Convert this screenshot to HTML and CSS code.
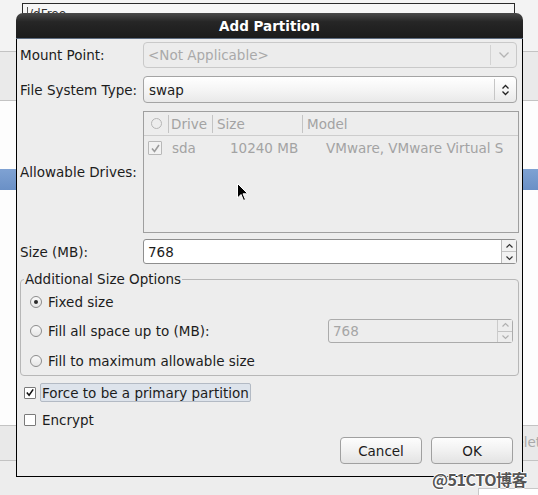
FILE: index.html
```html
<!DOCTYPE html>
<html>
<head>
<meta charset="utf-8">
<link rel="stylesheet" href="styles.css">
</head>
<body>
<div class="desk">
  <div class="bg-top">
    <div class="listbox"><span class="lb-sep"></span><span class="lb-text">/dFree</span></div>
  </div>
  <div class="bg-line"></div>
  <div class="bg-toolbar"></div>
  <div class="bg-line"></div>
  <div class="bg-white h68"></div>
  <div class="bg-sel"></div>
  <div class="bg-white h235"></div>
  <div class="bg-line"></div>
  <div class="bg-buttons"><span class="bg-btn">Delete</span></div>
  <div class="bg-line"></div>
  <div class="bg-bottom"><div class="bg-corner"></div></div>
</div>

<div class="dialog">
  <div class="titlebar">Add Partition</div>
  <div class="body">
    <div class="form">
      <div class="label m8">Mount Point:</div>
      <div class="combo disabled r1">
        <span class="combo-text">&lt;Not Applicable&gt;</span>
        <span class="combo-btn wide">
          <svg width="12" height="8" viewBox="0 0 12 8"><path d="M1.5 1.5 L6 6 L10.5 1.5" fill="none" stroke="#b4b4b4" stroke-width="1.3"/></svg>
        </span>
      </div>

      <div class="label m8">File System Type:</div>
      <div class="combo r2">
        <span class="combo-text">swap</span>
        <span class="combo-btn">
          <svg width="9" height="12" viewBox="0 0 9 12"><path d="M1.5 4.5 L4.5 1.5 L7.5 4.5 M1.5 7.5 L4.5 10.5 L7.5 7.5" fill="none" stroke="#222" stroke-width="1.3"/></svg>
        </span>
      </div>

      <div class="label m6">Allowable Drives:</div>
      <div class="tree r3">
        <div class="thead">
          <span class="th th0"><span class="hradio"></span></span>
          <span class="th th1">Drive</span>
          <span class="th th2">Size</span>
          <span class="th th3">Model</span>
        </div>
        <div class="trow">
          <span class="tcheck">
            <svg width="11" height="11" viewBox="0 0 11 11"><path d="M2 5.5 L4.5 8.5 L9 2" fill="none" stroke="#9c9c9c" stroke-width="1.6"/></svg>
          </span>
          <span class="td td1">sda</span>
          <span class="td td2">10240 MB</span>
          <span class="td td3">VMware, VMware Virtual S</span>
        </div>
      </div>

      <div class="label">Size (MB):</div>
      <div class="spin r4">
        <span class="spin-text">768</span>
        <span class="spin-btns">
          <span class="sb"><svg width="9" height="6" viewBox="0 0 9 6"><path d="M1.5 4.5 L4.5 1.5 L7.5 4.5" fill="none" stroke="#333" stroke-width="1.2"/></svg></span>
          <span class="sb"><svg width="9" height="6" viewBox="0 0 9 6"><path d="M1.5 1.5 L4.5 4.5 L7.5 1.5" fill="none" stroke="#333" stroke-width="1.2"/></svg></span>
        </span>
      </div>
    </div>

    <fieldset class="frame">
      <legend>Additional Size Options</legend>
      <div class="opt">
        <span class="radio checked"></span><span>Fixed size</span>
      </div>
      <div class="opt mid">
        <span class="radio"></span><span>Fill all space up to (MB):</span>
        <div class="spin small disabled">
          <span class="spin-text">768</span>
          <span class="spin-btns">
            <span class="sb"><svg width="9" height="6" viewBox="0 0 9 6"><path d="M1.5 4.5 L4.5 1.5 L7.5 4.5" fill="none" stroke="#b0b0b0" stroke-width="1.2"/></svg></span>
            <span class="sb"><svg width="9" height="6" viewBox="0 0 9 6"><path d="M1.5 1.5 L4.5 4.5 L7.5 1.5" fill="none" stroke="#b0b0b0" stroke-width="1.2"/></svg></span>
          </span>
        </div>
      </div>
      <div class="opt">
        <span class="radio"></span><span>Fill to maximum allowable size</span>
      </div>
    </fieldset>

    <div class="check-row first">
      <span class="check on"><svg width="11" height="11" viewBox="0 0 11 11"><path d="M2 5.5 L4.5 8.5 L9 2" fill="none" stroke="#111" stroke-width="1.7"/></svg></span>
      <span class="check-label focus">Force to be a primary partition</span>
    </div>
    <div class="check-row">
      <span class="check"></span>
      <span class="check-label">Encrypt</span>
    </div>

    <div class="buttons">
      <button class="btn">Cancel</button>
      <button class="btn">OK</button>
    </div>
  </div>
</div>

<svg class="cursor" width="12" height="19" viewBox="0 0 12 19">
  <path d="M0.5 0.5 L0.5 15 L4 11.5 L6.5 17.5 L8.5 16.6 L6 10.8 L10.8 10.8 Z" fill="#000" stroke="#fff" stroke-width="1"/>
</svg>

<div class="watermark">@51CTO博客</div>
</body>
</html>
```

FILE: styles.css
```css
html, body {
  margin: 0;
  padding: 0;
}
body {
  width: 538px;
  height: 495px;
  overflow: hidden;
  position: relative;
  background: #ededed;
  font-family: "DejaVu Sans", "Noto Sans", sans-serif;
  font-size: 13.5px;
  color: #1c1c1c;
}

/* ---------- background window ---------- */
.desk {
  display: flex;
  flex-direction: column;
}
.bg-top {
  height: 51px;
  background: #f3f3f3;
  padding-top: 3px;
  box-sizing: border-box;
}
.listbox {
  margin-left: 22px;
  width: 491px;
  height: 20px;
  border: 1px solid #2a2a2a;
  background: #f6f6f6;
  display: flex;
  align-items: center;
  font-size: 12px;
  color: #333;
}
.lb-sep {
  width: 1px;
  height: 14px;
  background: #555;
  margin: 0 0 0 4px;
}
.lb-text {
  margin-left: 1px;
}
.bg-line {
  height: 1px;
  background: #c3c3c3;
}
.bg-toolbar {
  height: 48px;
  background: #eaeaea;
}
.bg-white {
  background: #fdfdfd;
}
.h68 { height: 68px; }
.h235 { height: 235px; }
.bg-sel {
  height: 21px;
  background: linear-gradient(#7fa2d3, #6a90c6);
}
.bg-buttons {
  height: 34px;
  background: #e9e9e9;
  position: relative;
}
.bg-btn {
  position: absolute;
  left: 505px;
  top: 8px;
  color: #a9a9a9;
  font-size: 13.5px;
}
.bg-bottom {
  flex: 1;
  height: 40px;
  background: #efefef;
  position: relative;
}
.bg-corner {
  position: absolute;
  left: 478px;
  top: 27px;
  width: 70px;
  height: 20px;
  background: #fff;
  border: 1px solid #c8c8c8;
}

/* ---------- dialog ---------- */
.dialog {
  position: absolute;
  left: 16px;
  top: 13px;
  width: 507px;
  height: 464px;
  display: flex;
  flex-direction: column;
}
.titlebar {
  height: 26px;
  box-sizing: border-box;
  background: linear-gradient(#4a4a4a, #262626 35%, #1b1b1b);
  border-radius: 7px 7px 0 0;
  border-bottom: 1px solid #5d6c80;
  color: #fff;
  font-weight: bold;
  font-size: 13.5px;
  display: flex;
  align-items: center;
  justify-content: center;
  padding-top: 1px;
}
.body {
  flex: 1;
  background: #ededed;
  border: 1px solid #000;
  border-top: 0;
  padding: 3px 5px 0 3px;
  display: flex;
  flex-direction: column;
}

.form {
  display: grid;
  grid-template-columns: 123px 374px;
  align-items: center;
}
.label {
  white-space: nowrap;
}
.m8 { margin-bottom: 8px; }
.m6 { margin-bottom: 6px; }
.r1 { height: 26px; margin-bottom: 8px; }
.r2 { height: 27px; margin-bottom: 8px; }
.r3 { height: 122px; margin-bottom: 6px; width: 376px; }
.r4 { height: 25px; }

/* combos */
.combo {
  box-sizing: border-box;
  border: 1px solid #a4a4a4;
  border-radius: 4px;
  background: linear-gradient(#ffffff, #f3f3f3 60%, #e9e9e9);
  display: flex;
  align-items: center;
}
.combo.disabled {
  background: #ececec;
  border-color: #c9c9c9;
  color: #a9a9a9;
}
.combo-text {
  flex: 1;
  padding-left: 4px;
}
.combo.r2 .combo-text {
  padding-left: 5px;
}
.combo-btn {
  width: 21px;
  align-self: stretch;
  margin: 2px 0;
  border-left: 1px solid #c6c6c6;
  display: flex;
  align-items: center;
  justify-content: center;
}
.combo-btn.wide {
  width: 25px;
  border-left-color: #d3d3d3;
}

/* tree */
.tree {
  box-sizing: border-box;
  border: 1px solid #9f9f9f;
  background: #ededed;
  color: #a3a3a3;
}
.thead {
  height: 24px;
  box-sizing: border-box;
  border-bottom: 1px solid #cdcdcd;
  display: flex;
  align-items: center;
}
.th {
  height: 18px;
  display: flex;
  align-items: center;
  border-right: 1px solid #c4c4c4;
  box-sizing: border-box;
}
.th0 { width: 25px; justify-content: center; padding-left: 1px; }
.th1 { width: 44px; padding-left: 2px; }
.th2 { width: 90px; padding-left: 4px; }
.th3 { border-right: 0; padding-left: 4px; }
.hradio {
  width: 9px;
  height: 9px;
  border: 1px solid #b5b5b5;
  border-radius: 50%;
}
.trow {
  height: 24px;
  display: flex;
  align-items: center;
  white-space: nowrap;
}
.tcheck {
  width: 12px;
  height: 12px;
  margin-left: 4px;
  border: 1px solid #b8b8b8;
  border-radius: 1px;
  background: #f2f2f2;
  display: flex;
  align-items: center;
  justify-content: center;
}
.td1 { margin-left: 10px; width: 58px; }
.td2 { width: 96px; }

/* spin entries */
.spin {
  box-sizing: border-box;
  border: 1px solid #8e8e8e;
  border-radius: 3px;
  background: #fff;
  display: flex;
}
.spin-text {
  flex: 1;
  padding-left: 4px;
  display: flex;
  align-items: center;
}
.spin-btns {
  width: 14px;
  display: flex;
  flex-direction: column;
  border-left: 1px solid #b9b9b9;
  background: #f2f2f2;
}
.sb {
  flex: 1;
  display: flex;
  align-items: center;
  justify-content: center;
}
.sb + .sb {
  border-top: 1px solid #c3c3c3;
}
.spin.small {
  width: 185px;
  height: 24px;
  margin-left: auto;
  margin-right: 5px;
}
.spin.disabled {
  background: #ededed;
  border-color: #ababab;
  color: #a6a6a6;
}
.spin.disabled .spin-btns {
  background: #ededed;
  border-left-color: #cbcbcb;
}

/* frame */
.frame {
  margin: 7px -2px 0 0;
  padding: 0;
  border: 1px solid #b7b7b7;
  border-radius: 4px;
  min-width: 0;
}
.frame legend {
  padding: 0 1px;
  margin-left: 3px;
  line-height: 16px;
  color: #1c1c1c;
}
.opt {
  height: 29px;
  display: flex;
  align-items: center;
  padding-left: 9px;
}
.opt.mid {
  height: 30px;
}
.radio {
  width: 12px;
  height: 12px;
  box-sizing: border-box;
  border: 1px solid #8c8c8c;
  border-radius: 50%;
  background: linear-gradient(#fafafa, #e6e6e6);
  margin-right: 6px;
  display: flex;
  align-items: center;
  justify-content: center;
  flex: none;
}
.radio.checked::after {
  content: "";
  width: 4px;
  height: 4px;
  border-radius: 50%;
  background: #2a2a2a;
}

/* checks */
.check-row {
  display: flex;
  align-items: center;
  height: 19px;
  margin-top: 8px;
  padding-left: 4px;
}
.check-row.first {
  margin-top: 7px;
}
.check {
  width: 12px;
  height: 12px;
  box-sizing: border-box;
  border: 1px solid #7a7a7a;
  border-radius: 1px;
  background: #fff;
  display: flex;
  align-items: center;
  justify-content: center;
  margin-right: 4px;
}
.check-label {
  height: 19px;
  box-sizing: border-box;
  border: 1px solid transparent;
  padding: 0 1px;
  display: flex;
  align-items: center;
  white-space: nowrap;
}
.check-label.focus {
  background: #dde3eb;
  border-color: #b3bac4;
  border-radius: 2px;
}

/* buttons */
.buttons {
  display: flex;
  justify-content: flex-end;
  gap: 9px;
  margin-top: 8px;
  margin-right: 4px;
}
.btn {
  width: 82px;
  height: 27px;
  box-sizing: border-box;
  border: 1px solid #a0a0a0;
  border-radius: 4px;
  background: linear-gradient(#fdfdfd, #f1f1f1 50%, #e3e3e3);
  font-family: "DejaVu Sans", sans-serif;
  font-size: 13.5px;
  color: #1c1c1c;
  padding: 0;
}

/* overlays */
.cursor {
  position: absolute;
  left: 237px;
  top: 183px;
}
.watermark {
  position: absolute;
  left: 432px;
  top: 467px;
  font-family: "Noto Sans CJK SC", "DejaVu Sans", sans-serif;
  font-size: 16px;
  font-weight: bold;
  color: #555;
  letter-spacing: -0.5px;
  text-shadow: 1px 0 0 #fff, -1px 0 0 #fff, 0 1px 0 #fff, 0 -1px 0 #fff;
}
```
